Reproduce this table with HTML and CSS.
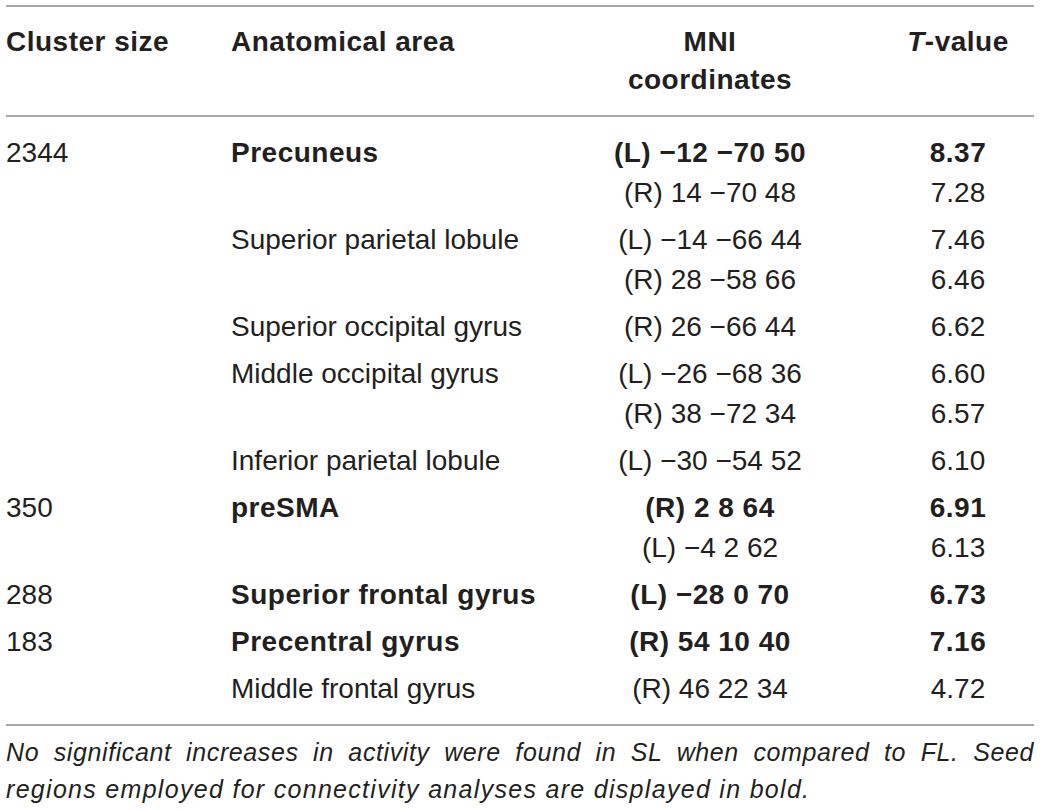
FILE: index.html
```html
<!DOCTYPE html>
<html lang="en">
<head>
  <meta charset="UTF-8" />
  <title>Clusters</title>
  <link rel="stylesheet" href="styles.css">
</head>
<body>

  <!-- Таблица кластеров -->
  <table class="clusters">
    <colgroup>
      <col class="c-size">
      <col class="c-area">
      <col class="c-mni">
      <col class="c-t">
    </colgroup>
    <thead>
      <tr>
        <th class="left">Cluster size</th>
        <th class="left">Anatomical area</th>
        <th class="mni">MNI<br>coordinates</th>
        <th class="tval"><i>T</i>-value</th>
      </tr>
    </thead>
    <tbody>
      <tr class="first">
        <td>2344</td>
        <td><b>Precuneus</b></td>
        <td class="mni"><b>(L) −12 −70 50</b><br>(R) 14 −70 48</td>
        <td class="tval"><b>8.37</b><br>7.28</td>
      </tr>
      <tr>
        <td></td>
        <td>Superior parietal lobule</td>
        <td class="mni">(L) −14 −66 44<br>(R) 28 −58 66</td>
        <td class="tval">7.46<br>6.46</td>
      </tr>
      <tr>
        <td></td>
        <td>Superior occipital gyrus</td>
        <td class="mni">(R) 26 −66 44</td>
        <td class="tval">6.62</td>
      </tr>
      <tr>
        <td></td>
        <td>Middle occipital gyrus</td>
        <td class="mni">(L) −26 −68 36<br>(R) 38 −72 34</td>
        <td class="tval">6.60<br>6.57</td>
      </tr>
      <tr>
        <td></td>
        <td>Inferior parietal lobule</td>
        <td class="mni">(L) −30 −54 52</td>
        <td class="tval">6.10</td>
      </tr>
      <tr>
        <td>350</td>
        <td><b>preSMA</b></td>
        <td class="mni"><b>(R) 2 8 64</b><br>(L) −4 2 62</td>
        <td class="tval"><b>6.91</b><br>6.13</td>
      </tr>
      <tr>
        <td>288</td>
        <td><b>Superior frontal gyrus</b></td>
        <td class="mni"><b>(L) −28 0 70</b></td>
        <td class="tval"><b>6.73</b></td>
      </tr>
      <tr>
        <td>183</td>
        <td><b>Precentral gyrus</b></td>
        <td class="mni"><b>(R) 54 10 40</b></td>
        <td class="tval"><b>7.16</b></td>
      </tr>
      <tr class="last">
        <td></td>
        <td>Middle frontal gyrus</td>
        <td class="mni">(R) 46 22 34</td>
        <td class="tval">4.72</td>
      </tr>
    </tbody>
  </table>

  <!-- Примечание под таблицей -->
  <p class="note">
    <span class="note-line">No significant increases in activity were found in SL when compared to FL. Seed</span>
    regions employed for connectivity analyses are displayed in bold.
  </p>

</body>
</html>
```

FILE: styles.css
```css
/* ======= Базовые стили ======= */
body {
  margin: 0;
  padding: 5px 7px 0 6px;
  background: #fff;
  color: #231f20;
  font-family: "Liberation Sans", Arial, sans-serif;
}

/* ======= Таблица ======= */
.clusters {
  width: 1028px;
  border-collapse: collapse;
  table-layout: fixed;
  font-size: 28px;
}
.c-size { width: 225px; }
.c-area { width: 329px; }
.c-mni  { width: 322px; }
.c-t    { width: 152px; }

.clusters thead {
  border-top: 2px solid #a6a6a6;
  border-bottom: 2px solid #a6a6a6;
}
.clusters th {
  font-weight: bold;
  letter-spacing: 0.5px;
  line-height: 38px;
  padding: 16px 0 16px;
  vertical-align: top;
}
.clusters th.left { text-align: left; }

.clusters td {
  line-height: 40px;
  padding: 3.5px 0;
  vertical-align: top;
  text-align: left;
}
.clusters td b { letter-spacing: 0.5px; }
.clusters tr.first td { padding-top: 16px; }
.clusters tr.last td { padding-bottom: 15px; }
.clusters tbody { border-bottom: 2px solid #a6a6a6; }

.clusters .mni {
  text-align: center;
  padding-right: 22px;
}
.clusters .tval {
  text-align: center;
}

/* ======= Примечание ======= */
.note {
  margin: 0;
  padding-top: 8px;
  width: 1028px;
  font-size: 25px;
  letter-spacing: 1.3px;
  line-height: 37px;
  font-style: italic;
}
/* первая строка растянута на всю ширину */
.note-line {
  display: block;
  text-align: justify;
  text-align-last: justify;
  letter-spacing: 0.6px;
}
```
